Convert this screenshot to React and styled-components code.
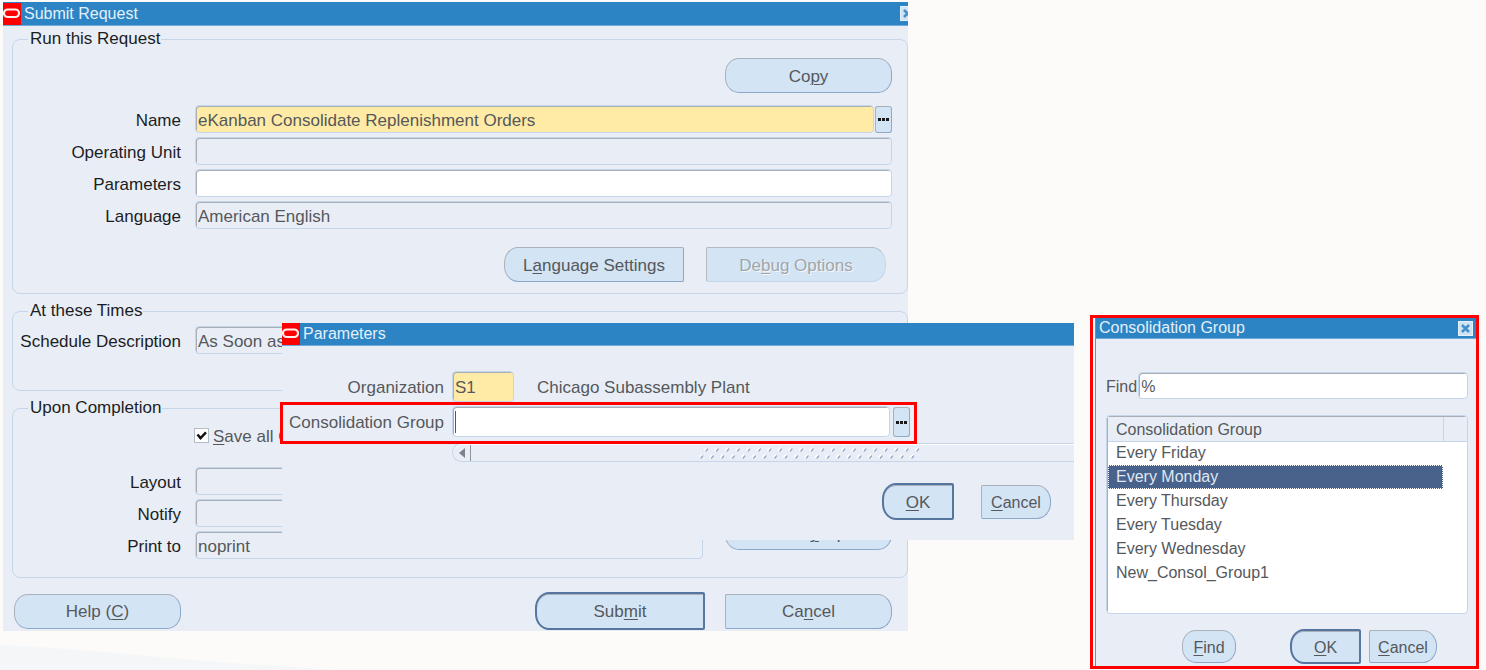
import React from "react";
import styled, { createGlobalStyle, css } from "styled-components";

const color = {
  page: "#fcfbf9",
  panel: "#e9eef6",
  title: "#2c84c4",
  titleText: "#e3f0fa",
  line: "#c6d6ea",
  shade: "#a9afb7",
  required: "#ffeba5",
  button: "#d3e4f4",
  ink: "#1c1d1f",
  text: "#55585c",
  strong: "#56759f",
  alert: "#ff0000",
  selected: "#48628c",
};

const GlobalStyle = createGlobalStyle`
  *, *::before, *::after { box-sizing: border-box; }
  body {
    margin: 0;
    background: ${color.page};
    font-family: "Liberation Sans", Arial, sans-serif;
    font-size: 17px;
    line-height: 20px;
    color: ${color.text};
  }
  button, input { font: inherit; color: inherit; }
  u { text-decoration-thickness: 1px; text-underline-offset: 2px; }
`;

const Desktop = styled.main`
  position: relative;
  display: flex;
  align-items: flex-start;
  gap: 182px;
  min-height: 100vh;
  padding: 2px 7px 2px 3px;
  overflow: hidden;
`;

const Swoosh = styled.svg`
  position: absolute;
  left: 0;
  bottom: 0;
`;

const Stage = styled.div`
  position: relative;
  flex: 1;
  min-width: 780px;
`;

const Window = styled.section`
  background: ${color.panel};
`;

const TitleBar = styled.header`
  display: flex;
  align-items: center;
  gap: 3px;
  height: ${(p) => p.$height}px;
  padding-left: ${(p) => (p.$plain ? 3 : 0)}px;
  padding-right: ${(p) => (p.$plain ? 3 : 0)}px;
  background: ${color.title};
  border-bottom: 1px solid #6fabd9;
  color: ${color.titleText};
`;

const Title = styled.h2`
  flex: 1;
  margin: 0;
  font-size: 16px;
  line-height: 20px;
  font-weight: 400;
`;

const CloseButton = styled.button`
  display: flex;
  overflow: hidden;
  width: ${(p) => (p.$cut ? 8 : 15)}px;
  height: 15px;
  padding: 0;
  border: 0;
  background: ${color.button};
`;

const WindowBody = styled.div`
  display: flex;
  flex-direction: column;
  gap: 7px;
  padding: 3px 0 1px 9px;
`;

const Group = styled.fieldset`
  min-width: 0;
  margin: 0;
  padding: ${(p) => p.$pad};
  border: 1px solid ${color.line};
  border-radius: 8px;
`;

const Legend = styled.legend`
  margin-left: 15px;
  padding: 0 1px 0 2px;
  color: ${color.ink};
`;

const Rows = styled.div`
  flex: 1;
  display: flex;
  flex-direction: column;
  gap: 4px;
`;

const Row = styled.div`
  display: grid;
  grid-template-columns: ${(p) => p.$label || 168}px 1fr;
  column-gap: ${(p) => p.$gap || 14}px;
  align-items: center;
`;

const Label = styled.label`
  padding-top: ${(p) => (p.$soft ? 2 : 4)}px;
  text-align: right;
  white-space: nowrap;
  color: ${(p) => (p.$soft ? color.text : color.ink)};
`;

const FieldWrap = styled.div`
  position: relative;
  display: flex;
  align-items: flex-end;
  gap: ${(p) => p.$gap || 1}px;
`;

const fills = { required: color.required, readonly: color.panel, open: "#ffffff" };

const Field = styled.input`
  flex: ${(p) => (p.$width ? "none" : 1)};
  width: ${(p) => (p.$width ? p.$width + "px" : "100%")};
  min-width: 0;
  height: ${(p) => p.$height || 28}px;
  padding: 3px 2px 0;
  border: 1px solid ${color.line};
  border-radius: 4px;
  box-shadow: inset 1px 1px ${color.shade};
  background: ${(p) => fills[p.$kind]};
  outline: none;
`;

const Caret = styled.span`
  position: absolute;
  top: 5px;
  left: 3px;
  width: 1px;
  height: 22px;
  background: ${color.text};
`;

const ListButton = styled.button`
  display: flex;
  align-items: center;
  justify-content: center;
  width: 17px;
  height: ${(p) => p.$height || 27}px;
  padding: 0;
  border: 1px solid;
  border-color: ${color.shade} #8faac9 #8faac9 ${color.shade};
  border-radius: 3px;
  background: ${color.button};
`;

const corner = {
  both: "14px / 15px",
  left: "14px 2px 2px 14px / 16px 2px 2px 16px",
  right: "2px 14px 14px 2px / 2px 16px 16px 2px",
};

const Button = styled.button`
  width: ${(p) => p.$width}px;
  height: ${(p) => p.$height || 35}px;
  padding: 2px 0 0;
  border: 1px solid;
  border-color: #a9b1ba #8ba7c9 #8ba7c9 #a9b1ba;
  border-radius: ${(p) => corner[p.$round]};
  background: ${color.button};
  white-space: nowrap;
  font-size: ${(p) => p.$font || 17}px;
  ${(p) =>
    p.$primary &&
    css`
      border: 2px solid ${color.strong};
      box-shadow: inset 0 1px #a9b1ba;
    `}
  &:disabled {
    border-color: #b5bac0 ${color.line} ${color.line} #b5bac0;
    color: #a0a5ab;
    text-shadow: 1px 1px #f3f7fb;
  }
`;

const Actions = styled.div`
  display: flex;
  justify-content: flex-end;
  align-items: center;
  gap: ${(p) => p.$gap || 0}px;
  padding: ${(p) => p.$pad || 0};
`;

const CheckRow = styled.label`
  display: flex;
  align-items: center;
  gap: 4px;
  height: 22px;
  margin-left: 181px;
  margin-bottom: 21px;
`;

const CheckText = styled.span`
  padding-top: 3px;
`;

const CheckBox = styled.input`
  appearance: none;
  width: 15px;
  height: 15px;
  margin: 0;
  border: 1px solid #b4bcc6;
  background: #ffffff
    url("data:image/svg+xml,%3Csvg xmlns='http://www.w3.org/2000/svg' viewBox='0 0 13 13'%3E%3Cpath d='M2.5 5.5l3 3.6L11 3.4' fill='none' stroke='%23111' stroke-width='2.4'/%3E%3C/svg%3E")
    center / 13px 13px no-repeat;
`;

const Columns = styled.div`
  display: flex;
  align-items: flex-end;
  gap: 22px;
`;

const SideAction = styled.div`
  padding-bottom: 9px;
`;

const Footer = styled.footer`
  display: flex;
  align-items: center;
  gap: 20px;
  padding: 7px 16px 0 2px;
`;

const Spring = styled.div`
  flex: 1;
`;

const ParametersWindow = styled(Window)`
  position: absolute;
  top: 321px;
  left: 279px;
  right: -166px;
  height: 217px;
`;

const ParameterForm = styled.div`
  padding-top: 25px;
`;

const ParameterRow = styled(Row)`
  padding-left: 2px;
`;

const Description = styled.span`
  align-self: center;
  padding-top: 2px;
  padding-left: 22px;
`;

const HighlightedRow = styled.div`
  position: relative;
  z-index: 1;
  width: 637px;
  margin-left: -2px;
  padding: 1px 4px 4px 1px;
  border: 3px solid ${color.alert};
`;

const ScrollTrack = styled.div`
  display: flex;
  align-items: center;
  height: 19px;
  margin-top: -1px;
  margin-left: 170px;
  border: 1px solid ${color.line};
  border-right: 0;
  border-radius: 10px 0 0 10px;
  box-shadow: inset 0 1px #ffffff;
`;

const ScrollArrow = styled.button`
  display: flex;
  align-items: center;
  justify-content: center;
  width: 18px;
  height: 16px;
  padding: 0;
  border: 0;
  border-right: 1px solid #8d949c;
  background: none;
`;

const GripArea = styled.div`
  flex: 1;
  display: flex;
  justify-content: center;
  padding-left: 80px;
`;

const PickerFrame = styled.aside`
  width: 389px;
  flex: none;
  margin-top: 313px;
  padding-left: 2px;
  border: 3px solid ${color.alert};
  background: #ffffff;
  font-size: 16px;
`;

const PickerWindow = styled(Window)`
  border-left: 1px solid #7089b3;
`;

const PickerBody = styled.div`
  padding: 33px 8px 2px 10px;
`;

const FindRow = styled.div`
  display: flex;
  align-items: center;
  gap: 1px;
`;

const ListBox = styled.div`
  height: 199px;
  margin-top: 16px;
  border: 1px solid ${color.line};
  border-radius: 4px;
  box-shadow: inset 1px 1px ${color.shade};
  background: #ffffff;
  padding: 1px 0 0 1px;
`;

const ListTable = styled.table`
  width: 100%;
  border-collapse: collapse;
  table-layout: fixed;
  text-align: left;
`;

const HeadCell = styled.th`
  height: 24px;
  width: ${(p) => (p.$narrow ? "24px" : "auto")};
  padding: 2px 0 0 8px;
  border-bottom: 1px solid ${color.line};
  border-right: ${(p) => (p.$narrow ? 0 : 1)}px solid ${color.line};
  background: ${color.panel};
  font-weight: 400;
`;

const Cell = styled.td`
  height: 24px;
  padding: 0 0 0 8px;
  ${(p) =>
    p.$selected &&
    css`
      background: ${color.selected};
      color: #dfe8f4;
      outline: 1px dotted #ffffff;
      outline-offset: -1px;
    `}
`;

function OracleLogo() {
  return (
    <svg width="18" height="22" viewBox="0 0 18 22" aria-hidden="true">
      <rect width="18" height="22" fill="#f00" />
      <rect x="1" y="6.5" width="15" height="7.5" rx="3.75" fill="none" stroke="#fff0ee" strokeWidth="2.2" />
    </svg>
  );
}

function CloseGlyph() {
  return (
    <svg width="15" height="15" viewBox="0 0 15 15" aria-hidden="true" style={{ flex: "none" }}>
      <rect x="0.5" y="0.5" width="14" height="14" fill="#cfe3f4" stroke="#e4f0fa" />
      <path d="M4 4l7 7M11 4l-7 7" stroke="#4690c8" strokeWidth="2.6" />
    </svg>
  );
}

function Dots() {
  return (
    <svg width="11" height="3" viewBox="0 0 11 3" aria-hidden="true">
      <path d="M0 0h3v3H0zM4 0h3v3H4zM8 0h3v3H8z" fill="#17191c" />
    </svg>
  );
}

function Grip() {
  const marks = Array.from({ length: 21 }, (_, i) => i * 10.55);
  return (
    <svg width="228" height="14" viewBox="0 0 228 14" aria-hidden="true">
      {marks.map((x) => (
        <g key={x} strokeWidth="1.3" strokeLinecap="round">
          <path d={`M${x + 6} 4l1.4-1.4M${x + 1} 11l1.4-1.4`} stroke="#ffffff" strokeWidth="2.4" />
          <path d={`M${x + 7} 5l1.6-2M${x + 2} 12l1.6-2`} stroke="#90a8c6" />
        </g>
      ))}
    </svg>
  );
}

function FormRow({ id, label, kind = "readonly", value = "", list }) {
  return (
    <Row>
      <Label htmlFor={id}>{label}</Label>
      <FieldWrap>
        <Field id={id} $kind={kind} defaultValue={value} readOnly={kind === "readonly"} />
        {list && (
          <ListButton type="button" aria-label={`${label} list`}>
            <Dots />
          </ListButton>
        )}
      </FieldWrap>
    </Row>
  );
}

function SubmitRequest() {
  return (
    <Window aria-label="Submit Request">
      <TitleBar $height={24}>
        <OracleLogo />
        <Title>Submit Request</Title>
        <CloseButton type="button" aria-label="Close" $cut>
          <CloseGlyph />
        </CloseButton>
      </TitleBar>
      <WindowBody>
        <Group $pad="9px 15px 11px 0">
          <Legend>Run this Request</Legend>
          <Actions $pad="0 0 12px">
            <Button type="button" $width={167} $round="both">
              Co<u>p</u>y
            </Button>
          </Actions>
          <Rows>
            <FormRow id="name" label="Name" kind="required" value="eKanban Consolidate Replenishment Orders" list />
            <FormRow id="unit" label="Operating Unit" />
            <FormRow id="params" label="Parameters" kind="open" />
            <FormRow id="language" label="Language" value="American English" />
          </Rows>
          <Actions $gap={22} $pad="18px 6px 0 0">
            <Button type="button" $width={180} $round="left">
              L<u>a</u>nguage Settings
            </Button>
            <Button type="button" $width={180} $round="right" disabled>
              De<u>b</u>ug Options
            </Button>
          </Actions>
        </Group>
        <Group $pad="5px 15px 36px 0">
          <Legend>At these Times</Legend>
          <FormRow id="schedule" label="Schedule Description" value="As Soon as Possible" />
        </Group>
        <Group $pad="6px 15px 18px 0">
          <Legend>Upon Completion</Legend>
          <CheckRow>
            <CheckBox type="checkbox" defaultChecked />
            <CheckText>
              <u>S</u>ave all Output Files
            </CheckText>
          </CheckRow>
          <Columns>
            <Rows>
              <FormRow id="layout" label="Layout" />
              <FormRow id="notify" label="Notify" />
              <FormRow id="print" label="Print to" value="noprint" />
            </Rows>
            <SideAction>
              <Button type="button" $width={167} $round="both">
                Deliver<u>y</u> Opts
              </Button>
            </SideAction>
          </Columns>
        </Group>
        <Footer>
          <Button type="button" $width={167} $round="both">
            Help (<u>C</u>)
          </Button>
          <Spring />
          <Button type="button" $width={170} $height={38} $round="left" $primary>
            Sub<u>m</u>it
          </Button>
          <Button type="button" $width={167} $round="right">
            Ca<u>n</u>cel
          </Button>
        </Footer>
      </WindowBody>
    </Window>
  );
}

function Parameters() {
  return (
    <ParametersWindow aria-label="Parameters">
      <TitleBar $height={23}>
        <OracleLogo />
        <Title>Parameters</Title>
      </TitleBar>
      <ParameterForm>
        <ParameterRow $label={160} $gap={8}>
          <Label htmlFor="org" $soft>Organization</Label>
          <FieldWrap>
            <Field id="org" $kind="required" $width={62} $height={31} defaultValue="S1" />
            <Description>Chicago Subassembly Plant</Description>
          </FieldWrap>
        </ParameterRow>
        <HighlightedRow>
          <Row $label={160} $gap={8}>
            <Label htmlFor="group" $soft>Consolidation Group</Label>
            <FieldWrap $gap={3}>
              <Field id="group" $kind="open" $height={31} />
              <Caret />
              <ListButton type="button" $height={30} aria-label="Consolidation Group list">
                <Dots />
              </ListButton>
            </FieldWrap>
          </Row>
        </HighlightedRow>
        <ScrollTrack>
          <ScrollArrow type="button" aria-label="Scroll left">
            <svg width="6" height="10" viewBox="0 0 6 10" aria-hidden="true">
              <path d="M6 0v10L0 5z" fill="#7c838b" />
            </svg>
          </ScrollArrow>
          <GripArea>
            <Grip />
          </GripArea>
        </ScrollTrack>
        <Actions $gap={27} $pad="21px 23px 0 0">
          <Button type="button" $width={72} $height={37} $round="left" $primary>
            <u>O</u>K
          </Button>
          <Button type="button" $width={70} $height={34} $round="right" $font={16}>
            <u>C</u>ancel
          </Button>
        </Actions>
      </ParameterForm>
    </ParametersWindow>
  );
}

const groups = [
  "Every Friday",
  "Every Monday",
  "Every Thursday",
  "Every Tuesday",
  "Every Wednesday",
  "New_Consol_Group1",
];

function GroupPicker() {
  return (
    <PickerFrame>
      <PickerWindow aria-label="Consolidation Group">
        <TitleBar $height={21} $plain>
          <Title>Consolidation Group</Title>
          <CloseButton type="button" aria-label="Close">
            <CloseGlyph />
          </CloseButton>
        </TitleBar>
        <PickerBody>
          <FindRow>
            <Label htmlFor="find" $soft>Find</Label>
            <Field id="find" $kind="open" $height={27} defaultValue="%" />
          </FindRow>
          <ListBox>
            <ListTable>
              <thead>
                <tr>
                  <HeadCell>Consolidation Group</HeadCell>
                  <HeadCell $narrow aria-label="Marker" />
                </tr>
              </thead>
              <tbody>
                {groups.map((name) => (
                  <tr key={name}>
                    <Cell $selected={name === "Every Monday"}>{name}</Cell>
                    <td />
                  </tr>
                ))}
              </tbody>
            </ListTable>
          </ListBox>
          <Actions $gap={8} $pad="15px 31px 0 76px">
            <Button type="button" $width={54} $height={33} $round="both" $font={16}>
              <u>F</u>ind
            </Button>
            <Spring />
            <Button type="button" $width={71} $height={35} $round="left" $font={16} $primary>
              <u>O</u>K
            </Button>
            <Button type="button" $width={68} $height={33} $round="right" $font={16}>
              <u>C</u>ancel
            </Button>
          </Actions>
        </PickerBody>
      </PickerWindow>
    </PickerFrame>
  );
}

export default function App() {
  return (
    <>
      <GlobalStyle />
      <Desktop>
        <Swoosh width="360" height="30" viewBox="0 0 360 30" aria-hidden="true">
          <path d="M0 4C60 6 130 14 220 21C270 25 320 28 360 30H0Z" fill="#f5f6f7" />
        </Swoosh>
        <Stage>
          <SubmitRequest />
          <Parameters />
        </Stage>
        <GroupPicker />
      </Desktop>
    </>
  );
}
